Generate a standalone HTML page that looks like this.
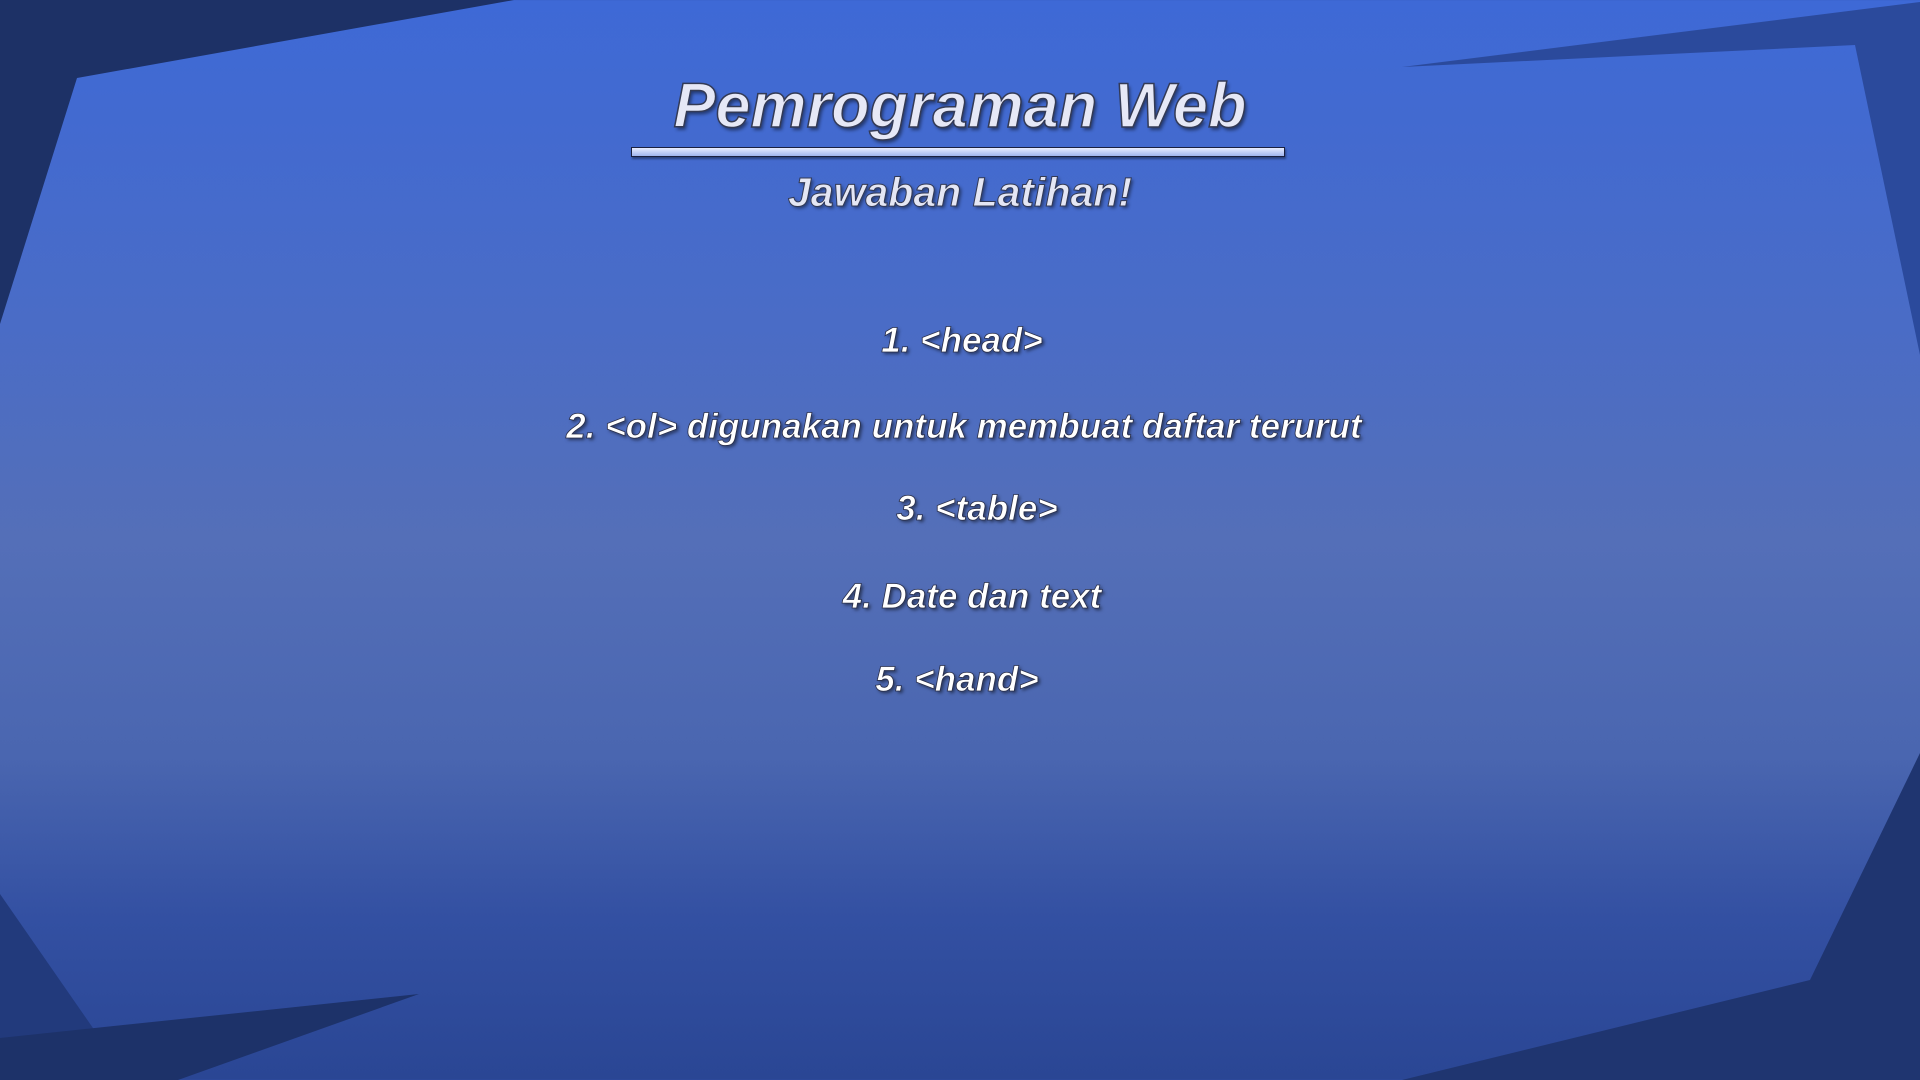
<!DOCTYPE html>
<html><head><meta charset="utf-8"><style>
html,body{margin:0;padding:0}
body{width:1920px;height:1080px;position:relative;overflow:hidden;
background:linear-gradient(180deg,#3e69d6 0%,#4a6cc6 30%,#546fb8 50%,#4a66b0 70%,#3350a2 85%,#2a4694 100%);
font-family:"Liberation Sans",sans-serif;}
svg.bg{position:absolute;left:0;top:0}
.t{position:absolute;left:0;width:1920px;text-align:center;font-style:italic;font-weight:bold;white-space:nowrap}
.title{top:70px;font-size:63px;color:#e6e8f6;
-webkit-text-stroke:1.5px #333a55;text-shadow:2px 3px 3px rgba(0,0,0,.45);left:0}
.bar{position:absolute;left:631px;top:147px;width:652px;height:8px;border:1px solid #1a2040;
background:linear-gradient(180deg,#e8ecff,#9fb4ee);box-shadow:1px 2px 2px rgba(0,0,0,.4)}
.sub{top:169px;font-size:41px;font-weight:bold;color:#e4e6f4;-webkit-text-stroke:1px #333a55;text-shadow:2px 2px 3px rgba(0,0,0,.45);left:0}
.li{font-size:35px;font-weight:bold;color:#fff;-webkit-text-stroke:0.8px #2a2f4a;text-shadow:2px 2px 3px rgba(0,0,0,.5)}
</style></head><body>
<svg class="bg" width="1920" height="1080">
<polygon points="0,0 514,0 77,78 0,324" fill="#1d3166"/>
<polygon points="1402,67 1920,2 1920,355 1855,45" fill="#2b4a9c"/>
<polygon points="1920,753 1810,980 1402,1080 1920,1080" fill="#1f3570"/>
<polygon points="0,894 129,1080 0,1080" fill="#223a7c"/>
<polygon points="0,1038 419,994 178,1080 0,1080" fill="#1d3269"/>
</svg>
<div class="t title">Pemrograman Web</div>
<div class="bar"></div>
<div class="t sub">Jawaban Latihan!</div>
<div class="t li" style="top:321px;left:2px">1. &lt;head&gt;</div>
<div class="t li" style="top:407px;left:4px">2. &lt;ol&gt; digunakan untuk membuat daftar terurut</div>
<div class="t li" style="top:489px;left:17px">3. &lt;table&gt;</div>
<div class="t li" style="top:577px;left:12px">4. Date dan text</div>
<div class="t li" style="top:660px;left:-3px">5. &lt;hand&gt;</div>
</body></html>
